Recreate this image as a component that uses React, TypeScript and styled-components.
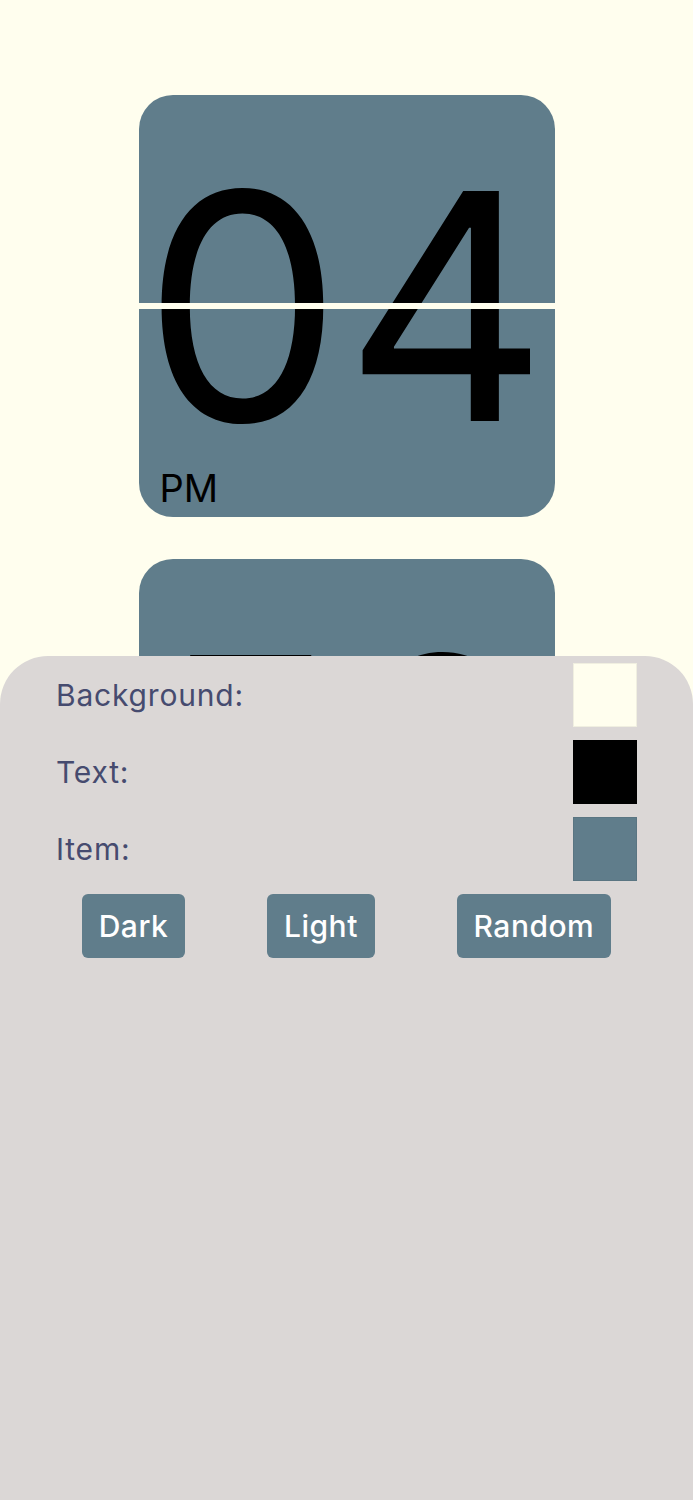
import styled, { createGlobalStyle } from "styled-components";

const theme = {
  background: "#fffeee",
  text: "#000000",
  item: "#607d8b",
};

const GlobalStyle = createGlobalStyle`
  html, body {
    margin: 0;
    padding: 0;
    background: ${theme.background};
    font-family: Inter, "Noto Sans", sans-serif;
  }
`;

const Clock = styled.main`
  display: flex;
  flex-direction: column;
  align-items: center;
  gap: 42px;
  padding-top: 95px;
  min-height: 1500px;
  box-sizing: border-box;
`;

const Card = styled.div`
  position: relative;
  width: 416px;
  height: 422px;
  border-radius: 34px;
  background: ${theme.item};
  display: flex;
  align-items: center;
  justify-content: center;
  overflow: hidden;
`;

const Digits = styled.span`
  color: ${theme.text};
  font-size: 316px;
  line-height: 0.8;
  letter-spacing: 2px;
`;

const Split = styled.div`
  position: absolute;
  left: 0;
  right: 0;
  top: 50%;
  height: 6px;
  margin-top: -3px;
  background: ${theme.background};
`;

const Meridiem = styled.span`
  position: absolute;
  left: 21px;
  bottom: 10px;
  font-size: 38px;
  line-height: 1;
  color: ${theme.text};
`;

const Panel = styled.section`
  position: fixed;
  left: 0;
  right: 0;
  bottom: 0;
  height: 844px;
  box-sizing: border-box;
  padding: 7px 56px 0;
  background: #dbd7d6;
  border-radius: 48px 48px 0 0;
`;

const Row = styled.div`
  display: flex;
  align-items: center;
  justify-content: space-between;
  height: 64px;
  margin-bottom: 13px;
`;

const Label = styled.span`
  font-size: 30px;
  letter-spacing: 0.8px;
  color: #464b6f;
`;

const Swatch = styled.div<{ color: string }>`
  width: 64px;
  height: 64px;
  background: ${(p) => p.color};
  box-shadow: inset 0 0 0 1px rgba(0, 0, 0, 0.06);
`;

const Buttons = styled.div`
  display: flex;
  justify-content: space-evenly;
  margin: 5px -56px 0;
`;

const Button = styled.button`
  height: 64px;
  padding: 0 17px;
  border: none;
  border-radius: 6px;
  background: ${theme.item};
  color: #ffffff;
  font-family: inherit;
  font-size: 30px;
  font-weight: 500;
  letter-spacing: 0.5px;
`;

const ClockCard = ({ value, meridiem }: { value: string; meridiem?: string }) => (
  <Card>
    <Digits>{value}</Digits>
    <Split />
    {meridiem && <Meridiem>{meridiem}</Meridiem>}
  </Card>
);

export default function App() {
  const colors = [
    { label: "Background:", color: theme.background },
    { label: "Text:", color: theme.text },
    { label: "Item:", color: theme.item },
  ];

  return (
    <>
      <GlobalStyle />
      <Clock>
        <ClockCard value="04" meridiem="PM" />
        <ClockCard value="50" />
      </Clock>
      <Panel>
        {colors.map((c) => (
          <Row key={c.label}>
            <Label>{c.label}</Label>
            <Swatch color={c.color} />
          </Row>
        ))}
        <Buttons>
          <Button>Dark</Button>
          <Button>Light</Button>
          <Button>Random</Button>
        </Buttons>
      </Panel>
    </>
  );
}
